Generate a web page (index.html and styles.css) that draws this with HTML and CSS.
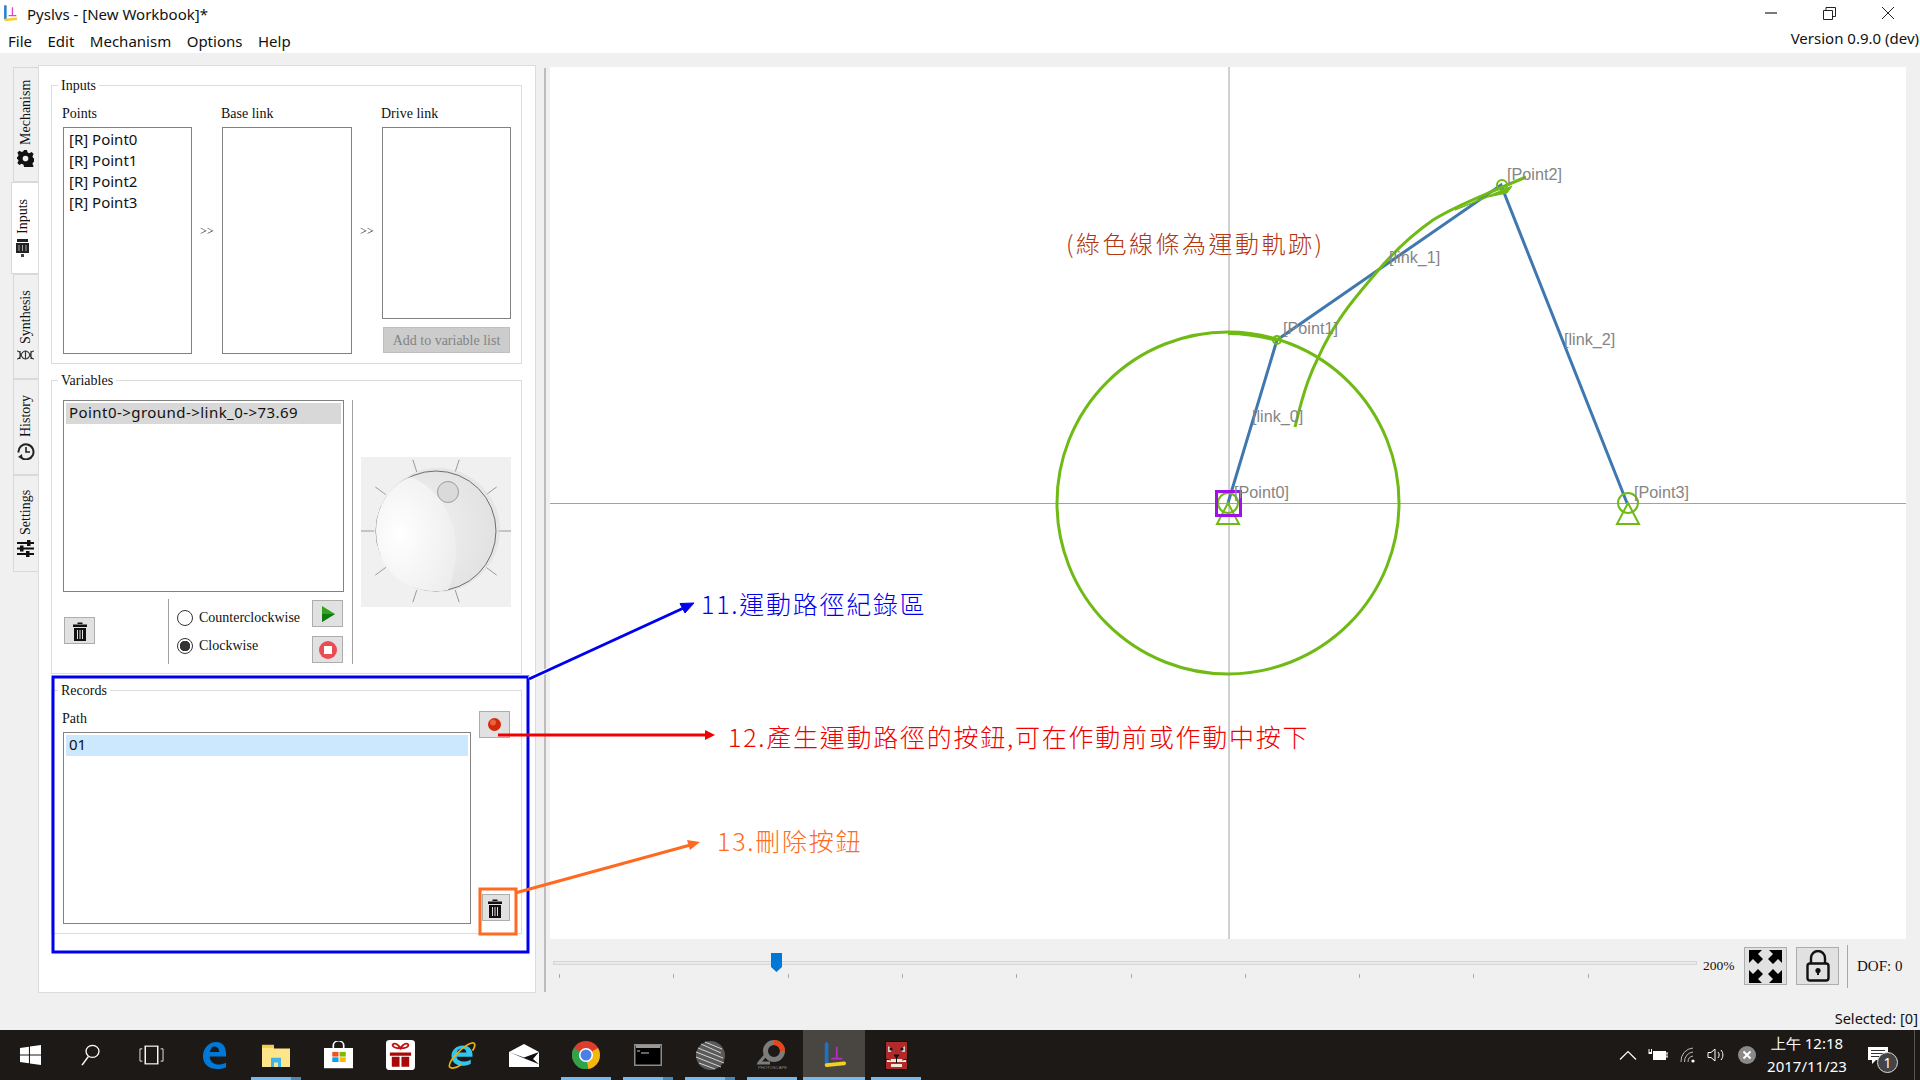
FILE: index.html
```html
<!doctype html>
<html>
  <head>
    <title>Pyslvs - [New Workbook]*</title>
    <link rel="stylesheet" href="styles.css">
  </head>
  <body>

    <div class="titlebar">
      <svg class="app-icon" width="17" height="18" viewBox="0 0 26 28">
        <path d="M5 2v22" stroke="#2a7fd0" stroke-width="4"/>
        <path d="M16 5v13M10 18h12" stroke="#e040d0" stroke-width="2"/>
        <path d="M4 25l19-2" stroke="#f4d020" stroke-width="4"/>
      </svg>
      <span class="title-text">Pyslvs - [New Workbook]*</span>
      <div class="window-buttons">
        <svg width="58" height="26" viewBox="0 0 58 26"><path d="M0 13h12" stroke="#222" stroke-width="1.200"/></svg>
        <svg width="59" height="26" viewBox="0 0 59 26"><path d="M0.500 10.500h9v9h-9zM3 10V7.500h9.500v9H10" fill="none" stroke="#222"/></svg>
        <svg width="38" height="26" viewBox="0 0 38 26"><path d="M0 7l12 12M12 7L0 19" stroke="#222"/></svg>
      </div>
    </div>

    <div class="menubar">
      <span>File</span><span>Edit</span><span>Mechanism</span><span>Options</span><span>Help</span>
      <span class="version">Version 0.9.0 (dev)</span>
    </div>

    <div class="main">
      <div class="workspace">

        <div class="tabs">
          <div class="tab tab-mech"><div class="tab-inner">
            <svg width="17" height="17" viewBox="0 0 24 24"><path d="M12 8a4 4 0 1 0 0 8 4 4 0 0 0 0-8zM10 0h4l1 3.500 2.500 1 3.200-1.700 2.800 2.800-1.700 3.200 1 2.500 3.200 1v4l-3.200 1-1 2.500 1.700 3.200-2.800 2.800-3.200-1.700-2.500 1L14 24h-4l-1-3.500-2.500-1-3.200 1.700-2.800-2.800 1.700-3.200-1-2.500L-2 13.500v-3l3.200-1 1-2.500-1.700-3.200 2.800-2.800 3.200 1.700 2.500-1z" fill="#111" fill-rule="evenodd"/></svg>
            <span>Mechanism</span>
          </div></div>
          <div class="tab tab-on tab-inputs"><div class="tab-inner">
            <svg width="15" height="20" viewBox="0 0 15 20"><path d="M2 0h11v3H2zM1 4h13v10H1z" fill="#222"/><path d="M4 6v6M7.500 6v6M11 6v6" stroke="#aaa"/><path d="M6 15h3v3H6z" fill="#444"/></svg>
            <span>Inputs</span>
          </div></div>
          <div class="tab tab-syn"><div class="tab-inner">
            <svg width="17" height="10" viewBox="0 0 17 10"><path d="M0 1c5 0 3 8 8.500 8S12 1 17 1M0 9c5 0 3-8 8.500-8S12 9 17 9M3 1v8M14 1v8M8.500 1v8" fill="none" stroke="#333" stroke-width="1.200"/></svg>
            <span>Synthesis</span>
          </div></div>
          <div class="tab tab-hist"><div class="tab-inner">
            <svg width="18" height="18" viewBox="0 0 18 18"><path d="M4 15.500a7.500 7.500 0 1 0-2.500-5" fill="none" stroke="#222" stroke-width="2"/><path d="M9 5v5h4" fill="none" stroke="#222" stroke-width="1.600"/><path d="M1 15l4-3 .5 5z" fill="#222"/></svg>
            <span>History</span>
          </div></div>
          <div class="tab tab-set"><div class="tab-inner">
            <svg width="17" height="17" viewBox="0 0 17 17"><path d="M0 3h17M0 8.500h17M0 14h17" stroke="#111" stroke-width="2.200"/><path d="M10 0h3.500v6H10zM3 5.500h3.500v6H3zM9 11h3.500v6H9z" fill="#111"/></svg>
            <span>Settings</span>
          </div></div>
        </div>

        <div class="panel">
          <fieldset class="group group-inputs">
            <legend>Inputs</legend>
            <div class="link-grid">
              <label>Points</label><i></i><label>Base link</label><i></i><label>Drive link</label>
              <ul class="list">
                <li>[R] Point0</li>
                <li>[R] Point1</li>
                <li>[R] Point2</li>
                <li>[R] Point3</li>
              </ul>
              <div class="arrow">&gt;&gt;</div>
              <ul class="list"></ul>
              <div class="arrow">&gt;&gt;</div>
              <div class="drive-col">
                <ul class="list"></ul>
                <button class="add-btn">Add to variable list</button>
              </div>
            </div>
          </fieldset>

          <fieldset class="group group-vars">
            <legend>Variables</legend>
            <div class="vars-row">
              <div class="vars-left">
                <ul class="list vars-list"><li class="sel-grey">Point0-&gt;ground-&gt;link_0-&gt;73.69</li></ul>
                <div class="vars-controls">
                  <div class="trash-slot">
                    <button class="tool-btn">
                      <svg class="trash" width="16" height="20" viewBox="0 0 16 20"><path d="M5.500 1.500h5V3h-5zM1 3.500h14V6H1zM2 7h12v13H2z" fill="#111"/><path d="M5.500 9v9M8 9v9M10.500 9v9" stroke="#ddd"/></svg>
                    </button>
                  </div>
                  <div class="radios">
                    <div class="radio-row"><b class="radio"></b>Counterclockwise</div>
                    <div class="radio-row"><b class="radio radio-on"></b>Clockwise</div>
                  </div>
                  <div class="play-btns">
                    <button class="tool-btn">
                      <svg width="14" height="16" viewBox="0 0 14 16"><path d="M1 0l13 8-13 8z" fill="#2fa51f"/><path d="M1 8h13l-13 8z" fill="#127a12"/></svg>
                    </button>
                    <button class="tool-btn">
                      <svg width="18" height="18" viewBox="0 0 18 18"><circle cx="9" cy="9" r="9" fill="#ec4c54"/><rect x="5" y="5" width="8" height="8" fill="#fff"/></svg>
                    </button>
                  </div>
                </div>
              </div>
              <div class="knob-col">
                <svg class="knob" width="150" height="150" viewBox="0 0 150 150">
                  <defs>
                    <radialGradient id="knobBase" cx="0.35" cy="0.5" r="0.8">
                      <stop offset="0" stop-color="#f2f2f2"/>
                      <stop offset="1" stop-color="#dedede"/>
                    </radialGradient>
                    <radialGradient id="knobLight" cx="0.3" cy="0.5" r="0.75">
                      <stop offset="0" stop-color="#ffffff"/>
                      <stop offset="1" stop-color="#ededed"/>
                    </radialGradient>
                  </defs>
                  <rect width="150" height="150" fill="#f0f0f0"/>
                  <g stroke="#9a9a9a">
                    <path d="M137 74h13M13 74H0"/>
                    <path d="M125.200 37.600l10.500-7.700M125.200 110.400l10.500 7.700M24.800 37.600l-10.500-7.700M24.800 110.400l-10.500 7.700"/>
                    <path d="M94.200 15l4-12.300M94.200 133l4 12.300M55.800 15l-4-12.300M55.800 133l-4 12.300"/>
                  </g>
                  <circle cx="77" cy="73" r="62" fill="#dcdcdc" opacity="0.5"/>
                  <circle cx="75" cy="74" r="60" fill="url(#knobBase)" stroke="#6e6e6e"/>
                  <path d="M50 20C88 36 107 84 87 133 60 139 16 125 15 74 15 44 35 24 50 20z" fill="url(#knobLight)"/>
                  <circle cx="87" cy="35" r="10.500" fill="#dadada" stroke="#9c9c9c"/>
                </svg>
              </div>
            </div>
          </fieldset>

          <fieldset class="group group-records">
            <legend>Records</legend>
            <div class="records-row">
              <div class="records-left">
                <label>Path</label>
                <ul class="list records-list"><li class="sel-blue">01</li></ul>
              </div>
              <div class="records-right">
                <button class="tool-btn rec-btn">
                  <svg width="13" height="13" viewBox="0 0 13 13"><circle cx="6.500" cy="6.500" r="6.500" fill="#d2280c"/><circle cx="5" cy="4.500" r="3" fill="#e8643c"/></svg>
                </button>
                <button class="tool-btn del-btn">
                  <svg class="trash" width="16" height="20" viewBox="0 0 16 20"><path d="M5.500 1.500h5V3h-5zM1 3.500h14V6H1zM2 7h12v13H2z" fill="#111"/><path d="M5.500 9v9M8 9v9M10.500 9v9" stroke="#ddd"/></svg>
                </button>
              </div>
            </div>
          </fieldset>
        </div>

        <div class="splitter"></div>

        <div class="right">
          <svg class="canvas" width="1356" height="872" viewBox="550 67 1356 872">
            <path d="M1229 67v872M550 503.500h1356" stroke="#a2a2a2"/>
            <g fill="none" stroke="#3f78b0" stroke-width="3">
              <path d="M1228 503L1277 340L1501 185L1627 503"/>
            </g>
            <g fill="none" stroke="#6fba14" stroke-width="3">
              <circle cx="1228" cy="503" r="171"/>
              <path d="M1295 427C1305 385 1312 370 1318 358C1335 320 1355 298 1376 273C1395 250 1413 234 1433 220C1450 209 1472 200 1493 191L1526 177"/>
              <path d="M1228 333C1245 333 1262 336 1277 340" stroke-width="4"/>
            </g>
            <path d="M1455 210L1512 186L1507 193L1488 197z" fill="#6fba14" stroke="#6fba14"/>
            <g fill="none" stroke="#6fba14" stroke-width="2">
              <circle cx="1277" cy="340" r="4"/>
              <circle cx="1502" cy="185" r="5"/>
              <circle cx="1228" cy="503" r="10"/>
              <path d="M1228 503L1217 524H1239z"/>
              <circle cx="1628" cy="503" r="10"/>
              <path d="M1628 503L1617 524H1639z"/>
            </g>
            <rect x="1216.500" y="491.500" width="24" height="24" fill="none" stroke="#a010e8" stroke-width="3"/>
            <g class="canvas-label">
              <text x="1234" y="498">[Point0]</text>
              <text x="1283" y="334">[Point1]</text>
              <text x="1507" y="180">[Point2]</text>
              <text x="1634" y="498">[Point3]</text>
              <text x="1252" y="422">[link_0]</text>
              <text x="1389" y="263">[link_1]</text>
              <text x="1564" y="345">[link_2]</text>
            </g>
          </svg>

          <div class="controls">
            <div class="slider">
              <div class="slider-track"></div>
              <div class="slider-ticks"></div>
              <svg class="slider-handle" width="11" height="19" viewBox="0 0 11 19"><path d="M0 0h11v14l-5.500 5L0 14z" fill="#0078d7"/></svg>
            </div>
            <span class="zoom-val">200%</span>
            <button class="tool-btn big-btn">
              <svg width="33" height="33" viewBox="0 0 33 33"><path d="M0 0h13l-4 4 5 5-5 5-5-5-4 4zM33 0v13l-4-4-5 5-5-5 5-5-4-4zM0 33V20l4 4 5-5 5 5-5 5 4 4zM33 33H20l4-4-5-5 5-5 5 5 4-4z" fill="#000"/></svg>
            </button>
            <button class="tool-btn big-btn">
              <svg width="24" height="32" viewBox="0 0 24 32"><path d="M5 14V8a7 7 0 0 1 14 0v6" fill="none" stroke="#111" stroke-width="2.400"/><rect x="1.500" y="13.500" width="21" height="17" rx="2.500" fill="none" stroke="#111" stroke-width="2.400"/><circle cx="12" cy="20.500" r="2.600" fill="#111"/><path d="M11 21h2v4h-2z" fill="#111"/></svg>
            </button>
            <span class="dof">DOF: 0</span>
          </div>
        </div>
      </div>

      <div class="statusbar">Selected: [0]</div>
    </div>

    <div class="taskbar">
      <div class="sys-slot">
        <svg width="21" height="20" viewBox="0 0 20 20" preserveAspectRatio="none"><path d="M0 3l8.500-1.300v7.800H0zM9.500 1.500L20 0v9.500H9.500zM0 10.500h8.500v7.800L0 17zM9.500 10.500H20V20L9.500 18.500z" fill="#fff"/></svg>
      </div>
      <div class="sys-slot">
        <svg width="20" height="22" viewBox="0 0 20 24" preserveAspectRatio="none"><circle cx="12.500" cy="8" r="6.500" fill="none" stroke="#fff" stroke-width="1.300"/><path d="M8.500 13.500L2 23" stroke="#fff" stroke-width="1.500"/></svg>
      </div>
      <div class="sys-slot">
        <svg width="25" height="20" viewBox="0 0 26 26" preserveAspectRatio="none"><rect x="6.500" y="1.500" width="13" height="23" fill="none" stroke="#fff" stroke-width="1.500"/><path d="M3.500 5H1v16h2.500M22.500 5H25v16h-2.500" fill="none" stroke="#fff"/></svg>
      </div>

      <div class="app-slot">
        <svg width="25" height="27" viewBox="0 0 26 30" preserveAspectRatio="none"><path d="M25 16H8c0 6 5 9 9 9 3 0 6-1 8-2v5c-2 1-5 2-9 2C7 30 1 24 1 16 1 7 7 0 15 0c7 0 10 6 10 13zM18 11c0-3-2-6-5-6s-4 3-5 6z" fill="#0078d7"/></svg>
      </div>
      <div class="app-slot open open-split">
        <svg width="28" height="23" viewBox="0 0 28 30" preserveAspectRatio="none"><path d="M0 3h12v3h16v24H0z" fill="#ffe58a"/><path d="M0 1h12v4H0z" fill="#f5c94a"/><path d="M9 18h10v12h-3v-6h-4v6H9z" fill="#3fb4e8"/></svg>
      </div>
      <div class="app-slot">
        <svg width="29" height="28" viewBox="0 0 28 36" preserveAspectRatio="none"><path d="M9 9V5a5 5 0 0 1 10 0v4" fill="none" stroke="#fff" stroke-width="1.600"/><path d="M0 9h28v26H0z" fill="#fff"/><path d="M8 14h6v6H8z" fill="#f25022"/><path d="M15 14h6v6h-6z" fill="#7fba00"/><path d="M8 21h6v6H8z" fill="#00a4ef"/><path d="M15 21h6v6h-6z" fill="#ffb900"/></svg>
      </div>
      <div class="app-slot">
        <svg width="29" height="30" viewBox="0 0 30 36" preserveAspectRatio="none"><rect width="30" height="36" rx="4" fill="#fff"/><path d="M4 15h22v4H4zM6 20h8v12H6zM16 20h8v12h-8z" fill="#a80808"/><path d="M15 10c-4-8-9-6-8-3s5 3 8 3c3 0 7 0 8-3s-4-5-8 3z" fill="none" stroke="#c01010" stroke-width="2"/></svg>
      </div>
      <div class="app-slot">
        <svg width="28" height="28" viewBox="0 0 32 32" preserveAspectRatio="none"><path d="M28 18H10c0 6 11 7 16 3v5c-9 5-22 2-22-9C4 6 18 2 25 8c3 3 3 6 3 10zM21 13c0-6-10-6-11 0z" fill="#35c4ee"/><path d="M2 30C-1 24 18 4 28 2M28 2c4 0 3 5 0 9M2 30c4 2 9 0 13-3" fill="none" stroke="#e8b010" stroke-width="2"/></svg>
      </div>
      <div class="app-slot">
        <svg width="30" height="23" viewBox="0 0 30 34" preserveAspectRatio="none"><path d="M15 0l15 12v22H0V12z" fill="#fff"/><path d="M0 12l15 8 15-8-6 10 6 8-15-9z" fill="#111"/></svg>
      </div>
      <div class="app-slot open">
        <svg width="28" height="28" viewBox="0 0 28 28">
          <circle cx="14" cy="14" r="14" fill="#db3e2d"/>
          <path d="M14 14L26 7A14 14 0 0 1 16 28z" fill="#f4b70f"/>
          <path d="M14 14L16 28A14 14 0 0 1 2 7z" fill="#2fa24a"/>
          <circle cx="14" cy="14" r="7" fill="#fff"/><circle cx="14" cy="14" r="5.500" fill="#4a7fe8"/>
        </svg>
      </div>
      <div class="app-slot open open-split">
        <svg width="28" height="22" viewBox="0 0 28 22"><rect x="0.500" y="0.500" width="27" height="21" fill="#000" stroke="#8a8a8a" stroke-width="2"/><path d="M2 1h24v3H2z" fill="#999"/><path d="M3 7h3M7 9h8" stroke="#ccc"/></svg>
      </div>
      <div class="app-slot open open-split">
        <svg width="29" height="29" viewBox="0 0 29 29"><circle cx="14.500" cy="14.500" r="14.500" fill="#5a5a5a"/><path d="M5 3l20 9M2 7l25 10M0 11l28 11M0 16l25 10M3 22l16 6M9 1l17 7" stroke="#d5d5d5"/></svg>
      </div>
      <div class="app-slot open">
        <svg width="32" height="31" viewBox="0 0 32 31">
          <circle cx="18" cy="11" r="8.500" fill="none" stroke="#7c7c7c" stroke-width="5"/>
          <path d="M18 2.500A8.500 8.500 0 0 1 26.500 11" fill="none" stroke="#e8451c" stroke-width="5"/>
          <path d="M10 13c-1 5-5 6-7 10h11" fill="none" stroke="#7c7c7c" stroke-width="3"/>
          <text class="photoscape" x="2" y="29">PHOTOSCAPE</text>
        </svg>
      </div>
      <div class="app-slot open active">
        <svg width="24" height="26" viewBox="0 0 26 28">
          <path d="M5 2v22" stroke="#1f72c0" stroke-width="4" stroke-linecap="round"/>
          <path d="M16 5v13M10 18h12" stroke="#b030c0" stroke-width="2"/>
          <path d="M5 25l19-2" stroke="#f4d020" stroke-width="4" stroke-linecap="round"/>
        </svg>
      </div>
      <div class="app-slot open">
        <svg width="23" height="29" viewBox="0 0 23 29">
          <rect x="0.500" y="0.500" width="22" height="28" fill="#b02a2a" stroke="#111"/>
          <path d="M3 5l4 3-1 3H3zM20 5l-4 3 1 3h3z" fill="#ccc"/>
          <circle cx="6" cy="8" r="1.500" fill="#111"/><circle cx="17" cy="8" r="1.500" fill="#111"/>
          <path d="M2 18h19v3H2zM6 23h11v3H6z" fill="#efe9da"/>
          <path d="M9 14h5l-2.500 3zM0 18l6 1M23 18l-6 1M11.500 17v5" stroke="#111" fill="#111"/>
        </svg>
      </div>

      <div class="tray">
        <div class="tray-slot t30">
          <svg width="18" height="10" viewBox="0 0 18 10"><path d="M1 9.500l8-8 8 8" fill="none" stroke="#fff" stroke-width="1.200"/></svg>
        </div>
        <div class="tray-slot t30">
          <svg width="20" height="12" viewBox="0 0 20 12"><path d="M5 2h13v9H5z" fill="#fff"/><path d="M18 4h2v4h-2zM1 0v3M3.500 0v3" stroke="#fff"/><path d="M.5 3h3.500v2H.5z" fill="#fff"/></svg>
        </div>
        <div class="tray-slot t30">
          <svg width="16" height="16" viewBox="0 0 16 16"><path d="M1 15A13 13 0 0 1 13 1M4.500 15A9.500 9.500 0 0 1 13 5M8 15a6 6 0 0 1 5-6" fill="none" stroke="#bbb"/><circle cx="13" cy="14" r="1.600" fill="#fff"/></svg>
        </div>
        <div class="tray-slot t28">
          <svg width="20" height="14" viewBox="0 0 20 14"><path d="M1 4.500h3L8 1v12L4 9.500H1zM11 4c1.500 2 1.500 4 0 6M14 2c2.500 3 2.500 7 0 10" fill="none" stroke="#fff"/></svg>
        </div>
        <div class="tray-slot t32">
          <svg width="18" height="18" viewBox="0 0 18 18"><circle cx="9" cy="9" r="9" fill="#8a8a8a"/><path d="M5.500 5.500l7 7M12.500 5.500l-7 7" stroke="#fff" stroke-width="2"/></svg>
        </div>
        <div class="clock">
          <span>上午 12:18</span>
          <span>2017/11/23</span>
        </div>
        <div class="tray-slot t58 notify">
          <svg class="note-icon" width="20" height="17" viewBox="0 0 20 17"><path d="M0 0h20v13H8l-4 4v-4H0z" fill="#fff"/><path d="M3 3.500h14M3 6.500h14M3 9.500h14" stroke="#333"/></svg>
          <b class="badge">1</b>
        </div>
        <div class="show-desktop"></div>
      </div>
    </div>

    <svg class="notes" width="1920" height="1080" viewBox="0 0 1920 1080">
      <rect x="53" y="677" width="475" height="275" fill="none" stroke="#0000f0" stroke-width="3"/>
      <rect x="480" y="889" width="36" height="45" fill="none" stroke="#ff6a20" stroke-width="3"/>
      <path d="M529 679L688 606" stroke="#fff" stroke-width="5"/>
      <path d="M529 679L688 606" stroke="#0000f0" stroke-width="3"/>
      <path d="M694 603L680 603.500L685 613z" fill="#0000f0" stroke="#0000f0"/>
      <path d="M498 735H708" stroke="#f00000" stroke-width="3"/>
      <path d="M715 735L705 730V740z" fill="#f00000"/>
      <path d="M515 893L694 844" stroke="#ff6a20" stroke-width="3"/>
      <path d="M700 842L687 840L690 850z" fill="#ff6a20"/>
      <text class="note note-brown" x="1066" y="253">(綠色線條為運動軌跡)</text>
      <text class="note" x="701" y="614" fill="#0000f0">11.運動路徑紀錄區</text>
      <text class="note" x="728" y="747" fill="#f00000">12.產生運動路徑的按鈕,可在作動前或作動中按下</text>
      <text class="note" x="717" y="851" fill="#ff6a20">13.刪除按鈕</text>
    </svg>

  </body>
</html>
```

FILE: styles.css
```css
* { margin: 0; padding: 0; box-sizing: border-box; }
html, body { width: 1920px; height: 1080px; overflow: hidden; }
body { position: relative; display: flex; flex-direction: column; background: #f0f0f0; font: 15px "Noto Sans", Arial, sans-serif; color: #111; }
ul { list-style: none; }
button { font: inherit; }

.titlebar { height: 26px; background: #fff; display: flex; align-items: center; padding-left: 2px; }
.app-icon { margin-right: 8px; }
.title-text { padding-top: 2px; }
.window-buttons { margin-left: auto; display: flex; }
.menubar { height: 27px; background: #fff; display: flex; align-items: center; padding: 2px 0 0 8px; gap: 15.500px; }
.version { margin-left: auto; margin-top: -6px; padding-right: 1px; }

.main { height: 977px; display: flex; flex-direction: column; padding-top: 12px; }
.workspace { height: 928px; display: flex; padding-left: 13px; }
.statusbar { flex: 1; text-align: right; padding: 16px 2px 0 0; line-height: 18px; font-size: 14.600px; }

/* vertical tabs */
.tabs { width: 25px; margin-top: 2px; flex: none; }
.tab { width: 25px; border: 1px solid #d9d9d9; border-right: none; }
.tab-on { width: 27px; margin-left: -2px; background: #fff; }
.tab-mech { height: 115px; }
.tab-inputs { height: 92px; }
.tab-syn { height: 105px; }
.tab-hist { height: 96px; }
.tab-set { height: 97px; }
.tab-inner { height: 100%; writing-mode: vertical-rl; transform: rotate(180deg); display: flex; align-items: center; gap: 5px; padding: 14px 3px 0 0; font: 14px "Liberation Serif", serif; }
.tab-inner svg { transform: rotate(180deg); flex: none; }
.tab-syn .tab-inner { padding-top: 18px; gap: 6px; }

.panel { width: 498px; flex: none; background: #fff; border: 1px solid #dcdcdc; padding: 10px 13px 0 12px; display: flex; flex-direction: column; gap: 7px; font: 14px "Liberation Serif", serif; }
.group { border: 1px solid #dcdcdc; }
.group legend { margin-left: -5px; padding: 2px 3px 0; line-height: 16px; }
.group-inputs { height: 288px; padding: 11px 10px 9px 11px; }
.group-vars { height: 303px; padding: 11px 0 0 11px; }
.group-records { height: 253px; padding: 11px 10px 9px 11px; }
label { display: block; height: 16px; line-height: 18px; margin-left: -1px; }

.list { background: #fff; border: 1px solid #828282; padding: 2px; font: 15px "Noto Sans", Arial, sans-serif; }
.list li { height: 21px; line-height: 19px; padding-left: 3px; }
.sel-grey { background: #d8d8d8; letter-spacing: 0.45px; }
.sel-blue { background: #cce8ff; }

.link-grid { display: grid; grid-template-columns: 129px 30px 130px 30px 129px; grid-template-rows: 16px 227px; row-gap: 6px; }
.arrow { padding: 96px 0 0 8px; font-size: 12px; line-height: 16px; }
.drive-col { display: flex; flex-direction: column; gap: 8px; }
.drive-col .list { height: 192px; }
.add-btn { height: 26px; width: 127px; margin-left: 1px; padding-top: 2px; background: #ccc; border: 1px solid #bfbfbf; color: #838383; font: 14px "Liberation Serif", serif; }

.vars-row { display: flex; height: 264px; }
.vars-left { width: 289px; flex: none; display: flex; flex-direction: column; gap: 7px; }
.vars-list { width: 281px; height: 192px; }
.vars-controls { display: flex; height: 65px; width: 280px; }
.trash-slot { width: 105px; padding: 0 0 2px 1px; display: flex; align-items: center; }
.radios { flex: 1; border-left: 1px solid #a0a0a0; padding-left: 8px; display: flex; flex-direction: column; justify-content: center; gap: 12px; }
.radio-row { display: flex; align-items: center; gap: 6px; height: 16px; }
.radio { width: 16px; height: 16px; border: 1px solid #333; border-radius: 50%; background: #fff; display: block; }
.radio-on { background: radial-gradient(circle, #333 0 5px, #fff 5.500px); }
.play-btns { width: 31px; display: flex; flex-direction: column; gap: 9px; padding-top: 1px; }
.knob-col { border-left: 1px solid #a0a0a0; padding-left: 8px; display: flex; align-items: center; }
.knob { display: block; }

.tool-btn { width: 31px; height: 27px; background: #e1e1e1; border: 1px solid #adadad; display: flex; align-items: center; justify-content: center; flex: none; }

.records-row { display: flex; gap: 8px; height: 214px; }
.records-left { width: 408px; flex: none; }
.records-list { height: 192px; margin-top: 6px; }
.records-right { display: flex; flex-direction: column; justify-content: space-between; padding: 1px 0 0; height: 211px; }
.del-btn { width: 28px; margin-left: 3px; padding-right: 3px; }

.splitter { width: 2px; margin: 3px 4px 1px 8px; background: #bdbdbd; flex: none; }
.right { width: 1356px; flex: none; display: flex; flex-direction: column; }
.canvas { display: block; margin-top: 2px; background: #fff; }
.canvas-label { font: 16.200px "Liberation Sans", Arial, sans-serif; fill: #858585; }

.controls { height: 54px; display: flex; align-items: center; padding-left: 3px; font: 13.500px "Liberation Serif", serif; }
.slider { width: 1144px; height: 38px; position: relative; padding-top: 14px; flex: none; }
.slider-track { height: 4px; background: #e7eaea; border: 1px solid #d6d6d6; }
.slider-ticks { height: 4px; margin: 9px 0 0 6px; background: repeating-linear-gradient(90deg, #aaa 0 1px, transparent 1px 114.300px); }
.slider-handle { position: absolute; left: 218px; top: 6px; }
.zoom-val { width: 47px; padding-left: 6px; flex: none; }
.big-btn { width: 43px; height: 38px; margin-right: 9px; }
.dof { border-left: 1px solid #a8a8a8; height: 43px; line-height: 43px; padding-left: 9px; margin-left: -1px; font-size: 15px; }

/* taskbar */
.taskbar { height: 50px; background: #1c1917; display: flex; color: #fff; }
.sys-slot { width: 60px; flex: none; display: flex; align-items: center; justify-content: center; }
.sys-slot:nth-child(3) { width: 63px; }
.app-slot { width: 62px; flex: none; display: flex; align-items: center; justify-content: center; }
.open { background: linear-gradient(#76b9ed, #76b9ed) center bottom / 50px 3px no-repeat; }
.open-split { background-image: linear-gradient(90deg, #76b9ed 0 80%, #4b87b5 80%); }
.active { background-color: #494541; background-size: 62px 3px; }
.photoscape { font: 4.200px "Liberation Sans", sans-serif; fill: #8a8a8a; }

.tray { margin-left: auto; display: flex; height: 50px; width: 307px; }
.tray-slot { display: flex; align-items: center; justify-content: center; flex: none; }
.t30 { width: 30px; }
.t28 { width: 28px; }
.t32 { width: 32px; }
.t58 { width: 58px; }
.clock { width: 88px; flex: none; display: flex; flex-direction: column; align-items: center; justify-content: center; line-height: 23px; font-size: 15px; }
.notify { position: relative; }
.note-icon { margin-right: 4px; }
.badge { position: absolute; left: 26px; top: 22px; width: 21px; height: 21px; border-radius: 50%; background: #444; border: 1px solid #ddd; text-align: center; font-weight: 400; line-height: 19px; font-size: 14px; }
.show-desktop { width: 1px; margin-left: 5px; background: #555; }

/* annotation layer drawn over the window */
.notes { position: absolute; left: 0; top: 0; }
.note { font: 300 25px "Noto Sans CJK TC", "Noto Sans", sans-serif; letter-spacing: 1.750px; }
.note-brown { font-size: 24px; letter-spacing: 2.500px; fill: #b2360f; }
```
